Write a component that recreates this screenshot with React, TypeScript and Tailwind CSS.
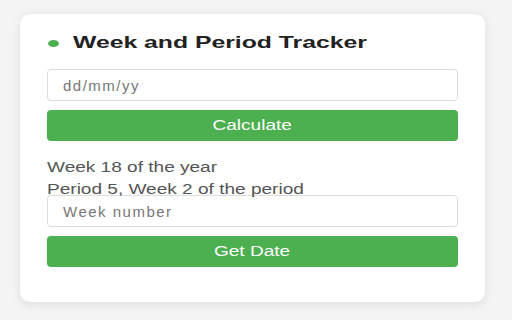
import React from "react";

export default function App() {
  return (
    <div className="min-h-[320px] w-[512px] bg-[#f4f4f4] pt-[14px] pl-[20px] font-['Liberation_Sans',Arial,sans-serif]">
      <div className="w-[465px] rounded-[10px] bg-white px-[27px] pt-[18px] pb-[35px] shadow-[0_2px_10px_rgba(0,0,0,0.1)]">
        <div className="flex h-[20px] items-center">
          <span className="ml-[1px] mt-[2px] h-[7px] w-[11px] rounded-[50%] bg-[#4caf50]" />
          <h1 className="ml-[14px] text-[16.5px] font-bold leading-[20px] text-[#222]">
            <span className="inline-block origin-left scale-x-[1.5] whitespace-nowrap">Week and Period Tracker</span>
          </h1>
        </div>
        <input
          type="text"
          placeholder="dd/mm/yy"
          className="mt-[17px] block h-[32px] w-full rounded-[4px] border border-[#ddd] bg-white pl-[15px] text-[15px] tracking-[1.5px] text-[#333] placeholder:text-[#777] outline-none"
        />
        <button className="mt-[9px] flex h-[31px] w-full items-center justify-center rounded-[4px] bg-[#4caf50] text-[14px] text-white">
          <span className="inline-block scale-x-[1.36]">Calculate</span>
        </button>
        <p className="mt-[20px] h-[12px] text-[14px] leading-[12px] text-[#555]">
          <span className="inline-block origin-left scale-x-[1.36] whitespace-nowrap">Week 18 of the year</span>
        </p>
        <p className="mt-[10px] h-[12px] text-[14px] leading-[12px] text-[#555]">
          <span className="inline-block origin-left scale-x-[1.36] whitespace-nowrap">Period 5, Week 2 of the period</span>
        </p>
        <input
          type="text"
          placeholder="Week number"
          className="block h-[32px] w-full rounded-[4px] border border-[#ddd] bg-white pl-[15px] text-[15px] tracking-[1.5px] text-[#333] placeholder:text-[#777] outline-none"
        />
        <button className="mt-[9px] flex h-[31px] w-full items-center justify-center rounded-[4px] bg-[#4caf50] text-[14px] text-white">
          <span className="inline-block scale-x-[1.36]">Get Date</span>
        </button>
      </div>
    </div>
  );
}
